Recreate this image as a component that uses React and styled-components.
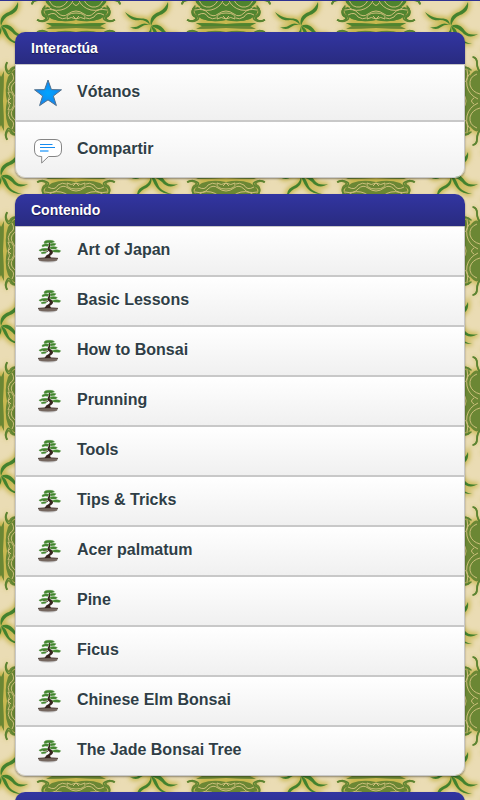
import React from 'react';
import styled, { createGlobalStyle } from 'styled-components';

const GlobalStyle = createGlobalStyle`
  * {
    box-sizing: border-box;
  }

  body {
    margin: 0;
    background: #eadcb4;
    overflow: hidden;
    font-family: "Liberation Sans", Arial, sans-serif;
  }
`;

const Page = styled.div`
  position: relative;
  height: 100vh;
  overflow: hidden;
  border-top: 1px solid #2f3192;
`;

const Wallpaper = styled.svg`
  position: absolute;
  inset: 0;
  width: 100%;
  height: 100%;
  z-index: -1;
`;

const Content = styled.main`
  display: flex;
  flex-direction: column;
  gap: 16px;
  padding: 31px 15px 0;
`;

const Section = styled.section`
  flex: none;
  border-radius: 10px;
  box-shadow: 0 1px 2px rgba(0, 0, 0, 0.4);
`;

const SectionTitle = styled.h2`
  margin: 0;
  height: 32px;
  padding: 0 16px;
  border-radius: 10px 10px 0 0;
  background: linear-gradient(#3235a1, #292b80);
  color: #fff;
  font-size: 14px;
  line-height: 32px;
  text-shadow: 0 1px 1px rgba(0, 0, 0, 0.5);
`;

const List = styled.ul`
  margin: 0;
  padding: 0;
  list-style: none;
  overflow: hidden;
  border: 1px solid #c8c8c8;
  border-radius: 0 0 10px 10px;
`;

const Item = styled.li`
  & + & {
    border-top: 2px solid #c8c8c8;
  }
`;

const ItemLink = styled.a`
  display: flex;
  align-items: center;
  gap: 14px;
  height: ${props => (props.$tall ? '55px' : '48px')};
  padding: 0 17px;
  background: linear-gradient(#fff, #f0f0f0);
  color: #2f3e46;
  font-size: 16px;
  font-weight: bold;
  line-height: 20px;
  text-decoration: none;
  text-shadow: 0 1px 1px #fff;
`;

const Icon = styled.svg`
  flex: none;
  width: 30px;
  height: 30px;
`;

const Label = styled.span`
  padding-bottom: 2px;
`;

function StarIcon() {
  return (
    <Icon viewBox="0 0 30 30" aria-hidden="true">
      <defs>
        <radialGradient id="starFill">
          <stop offset="0" stopColor="#00a5ff" />
          <stop offset="1" stopColor="#1583ec" />
        </radialGradient>
      </defs>
      <path
        d="M15 2 L18.4 11.6 L28.5 11.8 L20.4 18 L23.4 27.6 L15 21.9 L6.6 27.6 L9.6 18 L1.5 11.8 L11.6 11.6 Z"
        fill="url(#starFill)"
        stroke="#53718c"
        strokeWidth="1"
        strokeLinejoin="round"
      />
    </Icon>
  );
}

function ShareIcon() {
  return (
    <Icon viewBox="0 0 30 30" aria-hidden="true">
      <path
        d="M8 4.5 H22 Q28.5 4.5 28.5 11 V15 Q28.5 21.5 22 21.5 H15.5 L8.7 28 V21.5 H8 Q1.5 21.5 1.5 15 V11 Q1.5 4.5 8 4.5 Z"
        fill="#fff"
        stroke="#858585"
        strokeWidth="1"
      />
      <path d="M7 9.5 H19.5 M7 12.5 H22" stroke="#168cf0" strokeWidth="1.2" />
      <path d="M7 16 H15.5" stroke="#45a9fa" strokeWidth="1.6" />
    </Icon>
  );
}

function BonsaiIcon() {
  return (
    <Icon viewBox="0 0 30 30" aria-hidden="true">
      <ellipse cx="15" cy="25.6" rx="8" ry="1" fill="#c4c4c4" />
      <path d="M5 22 Q15 20.8 25 22 L24 24.8 Q15 26.2 6 24.8 Z" fill="#75675f" />
      <path d="M5 22.4 Q15 21.4 25 22.4" stroke="#584a43" strokeWidth="1" fill="none" />
      <path
        d="M11.5 22 L13.5 19.3 Q17 18 16.8 16 L14 13.8 Q16 11 16 6 L17.2 6.2 Q17.8 10 16.8 12.8 L20 15 Q20.5 18 17 19.8 L18 22 Z"
        fill="#35231e"
      />
      <path d="M10 14.3 L15 15.4 M18.5 16 L22 14.8" stroke="#443020" strokeWidth="1" />
      <g fill="#3f842c" stroke="#5c9648" strokeWidth="0.5">
        <path d="M11 6 Q12.5 3.8 16 4.3 Q20.5 3.8 21.5 5.8 L18.5 7 L15 6.7 L11.5 7.5 Z" />
        <path d="M9 9.3 Q12 6.8 16 8.3 L14.8 10.3 L12 10 L9.5 10.9 Z" />
        <path d="M17 8.6 Q19.500 6.400 23 7.800 L21.800 9.300 L18 10.100 Z" />
        <path d="M16.500 11.800 Q20 9.600 24.300 11.400 L22.800 12.900 L18 13 Z" />
        <path d="M6 14.200 Q9 11.700 14.500 12.500 L14 14.200 L11 14.300 L7 15.200 Z" />
        <path d="M19 14.700 Q24 12.700 27.700 14.800 L26.500 16.300 L21 16 Z" />
        <path d="M8 16.800 Q10.500 15.300 13.500 16.200 L12.500 17.300 L9 17.700 Z" />
      </g>
    </Icon>
  );
}

function Pattern() {
  return (
    <Wallpaper aria-hidden="true">
      <defs>
        <filter id="halo" x="-30%" y="-30%" width="160%" height="160%">
          <feGaussianBlur stdDeviation="2.5" />
        </filter>
        <g id="sprig">
          <path d="M0 0 C-2 -8 2 -12 8 -14 Q14 -17 17 -24 C18 -17 15 -13 9 -11 Q2 -8 0 0 Z" />
          <path d="M-1 -1 C-2 -9 -8 -7 -14 -8 Q-20 -9 -26 -14 C-22 -7 -17 -5 -11 -6 Q-5 -6 -1 -1 Z" />
          <path d="M-1 -1 Q-7 -4 -11 -1 Q-15 2 -21 1 Q-15 5 -10 1 Q-6 -2 -1 -1 Z" />
          <path d="M0 0 C6 -3 11 0 14 5 Q18 10 27 8 C21 12 15 11 11 6 Q6 2 0 0 Z" />
          <path d="M0 0 C6 2 6 8 9 12 Q13 16 21 18 Q11 18 7 13 Q3 9 0 0 Z" />
          <path d="M0 0 C2 8 -2 11 -7 13 Q-12 16 -14 22 Q-15 14 -9 11 Q-1 8 0 0 Z" />
        </g>
        <g id="half">
          <path d="M-30 -3 Q-14 -3 0 -2 Q14 -3 30 -3 L24 0 H-24 Z" />
          <path d="M-25 -19 Q-33 -20 -31 -13 Q-28 -9 -24 -7 Q-13 -3 0 -6 Q13 -3 24 -7 Q28 -9 31 -13 Q33 -20 25 -19 Q34 -25 28 -30 H-28 Q-34 -25 -25 -19 Z" />
          <path
            d="M-39 -6 Q-34 -4 -31 -6 Q-28 -8 -32 -10 Q-36 -14 -31 -19 M39 -6 Q34 -4 31 -6 Q28 -8 32 -10 Q36 -14 31 -19 M-44 -22 Q-43 -26 -38 -26 Q-32 -26 -28 -30 M44 -22 Q43 -26 38 -26 Q32 -26 28 -30"
            fill="none"
            strokeWidth="1.8"
          />
        </g>
        <g id="curls" fill="none" strokeWidth="1.6" strokeLinecap="round">
          <path d="M-38 -6 Q-34 -3 -29 -6 Q-25 -8 -31 -11 Q-36 -15 -31 -20" />
          <path d="M38 -6 Q34 -3 29 -6 Q25 -8 31 -11 Q36 -15 31 -20" />
          <path d="M-44 -22 Q-43 -26 -38 -26 Q-32 -26 -28 -30" />
          <path d="M44 -22 Q43 -26 38 -26 Q32 -26 28 -30" />
        </g>
        <g id="lines" fill="none" stroke="#cdbf7a" strokeWidth="1">
          <path d="M-31 -16 Q-22 -18 -18 -13 Q-13 -8 -8 -12 Q-4 -15 0 -15 Q4 -15 8 -12 Q13 -8 18 -13 Q22 -18 31 -16" />
          <path d="M-28 -11 Q-21 -15 -18 -9 Q-13 -6 -10 -8 M28 -11 Q21 -15 18 -9 Q13 -6 10 -8" />
          <path d="M-9 -7 Q-10 -13 0 -13 Q10 -13 9 -7 Q5 -10 0 -7 Q-5 -10 -9 -7 M-3 -10 L0 -7 L3 -10" />
          <path d="M-30 -22 Q-25 -14 -15 -16 Q-6 -18 -2 -27 M30 -22 Q25 -14 15 -16 Q6 -18 2 -27" />
          <path d="M-27 -26 Q-24 -18 -16 -19 Q-9 -21 -7 -29 M27 -26 Q24 -18 16 -19 Q9 -21 7 -29" />
          <path d="M-3 -23 Q0 -18 3 -23" />
        </g>
        <g id="medallion">
          <use href="#half" />
          <use href="#half" transform="scale(1 -1)" />
        </g>
        <g id="medallionCurls">
          <use href="#curls" />
          <use href="#curls" transform="scale(1 -1)" />
        </g>
        <g id="veins">
          <use href="#lines" />
          <use href="#lines" transform="scale(1 -1)" />
        </g>
        <pattern id="leaves" width="150" height="150" patternUnits="userSpaceOnUse" x="-74" y="-50">
          <rect width="150" height="150" fill="#eadcb4" />
          <g fill="#c8b850" stroke="#c8b850" strokeWidth="4" filter="url(#halo)">
            <use href="#sprig" x="75" y="75" />
            <use href="#medallion" transform="translate(0 75)" />
            <use href="#medallion" transform="translate(150 75)" />
            <use href="#medallion" transform="translate(75 0) rotate(90)" />
            <use href="#medallion" transform="translate(75 150) rotate(90)" />
          </g>
          <use href="#sprig" x="75" y="75" fill="#43822e" />
          <g fill="#6b8734" stroke="#6b8734" strokeWidth="0">
            <use href="#medallion" transform="translate(0 75)" />
            <use href="#medallion" transform="translate(150 75)" />
            <use href="#medallion" transform="translate(75 0) rotate(90)" />
            <use href="#medallion" transform="translate(75 150) rotate(90)" />
          </g>
          <g fill="#4f842f" stroke="#4f842f" strokeWidth="0">
            <use href="#half" transform="translate(0 75)" />
            <use href="#half" transform="translate(150 75)" />
          </g>
          <g stroke="#5b8431">
            <use href="#medallionCurls" transform="translate(0 75)" />
            <use href="#medallionCurls" transform="translate(150 75)" />
            <use href="#medallionCurls" transform="translate(75 0) rotate(90)" />
            <use href="#medallionCurls" transform="translate(75 150) rotate(90)" />
          </g>
          <use href="#veins" transform="translate(0 75)" />
          <use href="#veins" transform="translate(150 75)" />
          <use href="#veins" transform="translate(75 0) rotate(90)" />
          <use href="#veins" transform="translate(75 150) rotate(90)" />
        </pattern>
      </defs>
      <rect width="100%" height="100%" fill="url(#leaves)" />
    </Wallpaper>
  );
}

const actions = [
  { name: 'Vótanos', icon: StarIcon },
  { name: 'Compartir', icon: ShareIcon },
];

const lessons = [
  'Art of Japan',
  'Basic Lessons',
  'How to Bonsai',
  'Prunning',
  'Tools',
  'Tips & Tricks',
  'Acer palmatum',
  'Pine',
  'Ficus',
  'Chinese Elm Bonsai',
  'The Jade Bonsai Tree',
];

function App() {
  return (
    <Page>
      <GlobalStyle />
      <Pattern />
      <Content>
        <Section>
          <SectionTitle>Interactúa</SectionTitle>
          <List>
            {actions.map(({ name, icon: ActionIcon }) => (
              <Item key={name}>
                <ItemLink href="#" $tall>
                  <ActionIcon />
                  <Label>{name}</Label>
                </ItemLink>
              </Item>
            ))}
          </List>
        </Section>
        <Section>
          <SectionTitle>Contenido</SectionTitle>
          <List>
            {lessons.map(name => (
              <Item key={name}>
                <ItemLink href="#">
                  <BonsaiIcon />
                  <Label>{name}</Label>
                </ItemLink>
              </Item>
            ))}
          </List>
        </Section>
        <Section>
          <SectionTitle aria-hidden="true" />
        </Section>
      </Content>
    </Page>
  );
}

export default App;
